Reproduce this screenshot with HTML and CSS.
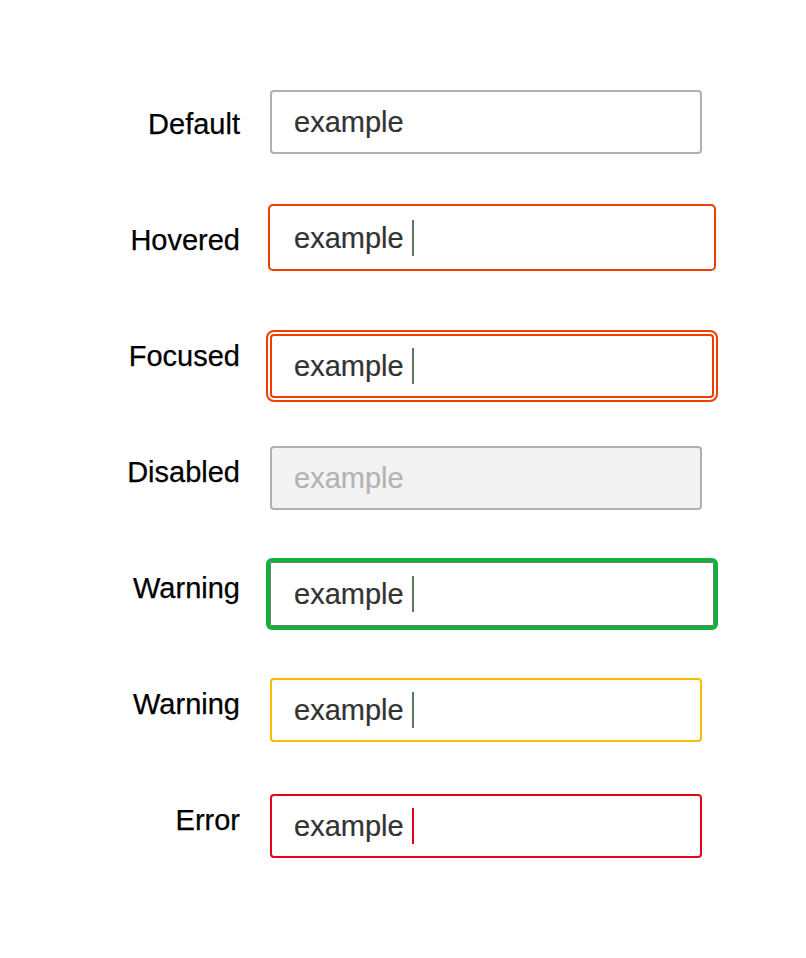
FILE: index.html
```html
<!DOCTYPE html>
<html>
<head>
<meta charset="utf-8">
<link rel="stylesheet" href="styles.css">
</head>
<body>
<div class="states">
  <div class="label">Default</div>
  <div class="field field-default"><span class="value">example</span></div>

  <div class="label">Hovered</div>
  <div class="field field-hovered"><span class="value">example</span><span class="caret"></span></div>

  <div class="label">Focused</div>
  <div class="field field-focused"><span class="value">example</span><span class="caret"></span></div>

  <div class="label">Disabled</div>
  <div class="field field-disabled"><span class="value">example</span></div>

  <div class="label">Warning</div>
  <div class="field field-success"><span class="value">example</span><span class="caret"></span></div>

  <div class="label">Warning</div>
  <div class="field field-warning"><span class="value">example</span><span class="caret"></span></div>

  <div class="label">Error</div>
  <div class="field field-error"><span class="value">example</span><span class="caret caret-error"></span></div>
</div>
</body>
</html>
```

FILE: styles.css
```css
html, body {
  margin: 0;
  padding: 0;
  background: #ffffff;
}

body {
  font-family: "Liberation Sans", Arial, Helvetica, sans-serif;
}

.states {
  display: grid;
  grid-template-columns: 240px auto;
  grid-auto-rows: 116px;
  column-gap: 30px;
  align-items: start;
  justify-content: start;
  padding-top: 90px;
}

.label {
  text-align: right;
  font-size: 29px;
  line-height: 34px;
  margin-top: 17px;
  color: #000000;
  -webkit-text-stroke: 0.25px #000000;
}

.field {
  box-sizing: border-box;
  display: flex;
  align-items: center;
  width: 432px;
  height: 64px;
  border: 2px solid #b0b0b0;
  border-radius: 4px;
  padding-left: 22px;
  background: #ffffff;
}

.value {
  font-size: 29px;
  color: #333333;
  line-height: 34px;
  -webkit-text-stroke: 0.2px #333333;
}

.caret {
  display: block;
  width: 2px;
  height: 36px;
  margin-left: 8px;
  background: #5b7a5e;
}

.caret-error {
  background: #e3001b;
}

.field-default {
  margin-top: 0;
}

.field-hovered {
  width: 448px;
  height: 67px;
  margin-top: -2px;
  margin-left: -2px;
  padding-left: 24px;
  border-color: #f23d00;
  border-radius: 5px;
}

.field-focused {
  width: 444px;
  height: 64px;
  margin-top: 12px;
  border-color: #f23d00;
  outline: 2px solid #f23d00;
  outline-offset: 2px;
  border-radius: 4px;
}

.field-disabled {
  margin-top: 8px;
  background: #f3f3f3;
}

.field-disabled .value {
  color: #b3b3b3;
  -webkit-text-stroke: 0.2px #b3b3b3;
}

.field-success {
  width: 452px;
  height: 72px;
  margin-top: 4px;
  margin-left: -4px;
  padding-left: 24px;
  border: 4px solid #12b13d;
  border-radius: 6px;
  box-shadow: inset 0 0 0 1px #6f7f6f;
}

.field-warning {
  margin-top: 8px;
  border-color: #f7bb00;
}

.field-error {
  margin-top: 8px;
  border-color: #e6001c;
}
```
